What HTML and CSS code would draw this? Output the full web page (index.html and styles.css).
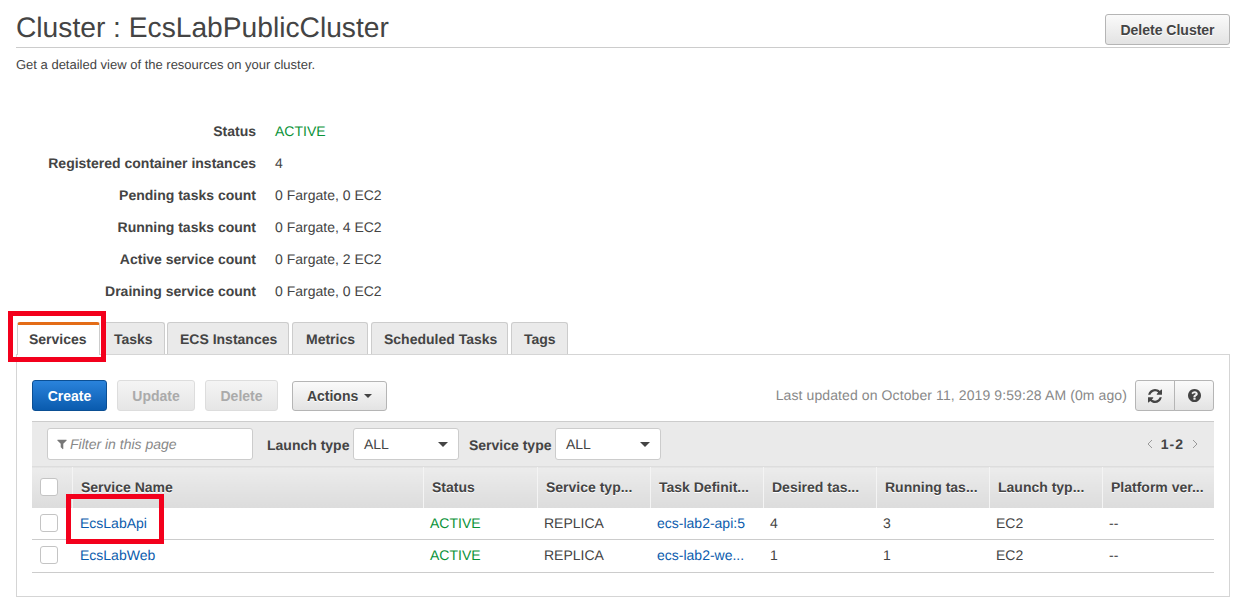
FILE: index.html
```html
<!DOCTYPE html>
<html>
<head>
    <meta charset="UTF-8">
    <title>Cluster : EcsLabPublicCluster</title>
    <link rel="stylesheet" href="styles.css">
</head>
<body>
    <div class="page">
        <div class="page-head">
            <h1>Cluster : EcsLabPublicCluster</h1>
            <button type="button" class="btn btn-delete-cluster">Delete Cluster</button>
        </div>
        <p class="page-desc">Get a detailed view of the resources on your cluster.</p>

        <dl class="details">
            <div class="detail-row"><dt>Status</dt><dd class="active">ACTIVE</dd></div>
            <div class="detail-row"><dt>Registered container instances</dt><dd>4</dd></div>
            <div class="detail-row"><dt>Pending tasks count</dt><dd>0 Fargate, 0 EC2</dd></div>
            <div class="detail-row"><dt>Running tasks count</dt><dd>0 Fargate, 4 EC2</dd></div>
            <div class="detail-row"><dt>Active service count</dt><dd>0 Fargate, 2 EC2</dd></div>
            <div class="detail-row"><dt>Draining service count</dt><dd>0 Fargate, 0 EC2</dd></div>
        </dl>

        <ul class="tabs">
            <li class="tab tab-active">Services</li>
            <li class="tab">Tasks</li>
            <li class="tab">ECS Instances</li>
            <li class="tab">Metrics</li>
            <li class="tab">Scheduled Tasks</li>
            <li class="tab">Tags</li>
        </ul>

        <div class="panel">
            <div class="actions">
                <button type="button" class="btn btn-primary">Create</button>
                <button type="button" class="btn btn-disabled btn-update">Update</button>
                <button type="button" class="btn btn-disabled btn-remove">Delete</button>
                <button type="button" class="btn btn-actions">Actions <span class="caret"></span></button>
                <span class="updated">Last updated on October 11, 2019 9:59:28 AM (0m ago)</span>
                <div class="btn-group">
                    <button type="button" class="btn btn-icon">
                        <svg width="14" height="14" viewBox="0 0 1536 1536"><path fill="#444" d="M1511 928q0 5-1 7-64 268-268 434.5t-478 166.5q-146 0-282.5-55t-243.5-157l-129 129q-19 19-45 19t-45-19-19-45v-448q0-26 19-45t45-19h448q26 0 45 19t19 45-19 45l-137 137q71 66 161 102t187 36q134 0 250-65t186-179q11-17 53-117 8-23 30-23h192q13 0 22.5 9.5t9.5 22.5zm25-800v448q0 26-19 45t-45 19h-448q-26 0-45-19t-19-45 19-45l138-138q-148-137-349-137-134 0-250 65t-186 179q-11 17-53 117-8 23-30 23h-199q-13 0-22.5-9.5t-9.5-22.5v-7q65-268 270-434.5t480-166.5q146 0 284 55.5t245 156.5l130-129q19-19 45-19t45 19 19 45z"/></svg>
                    </button>
                    <button type="button" class="btn btn-icon">
                        <svg width="13" height="13" viewBox="128 128 1536 1536"><path fill="#444" d="M1024 1376v-192q0-14-9-23t-23-9h-192q-14 0-23 9t-9 23v192q0 14 9 23t23 9h192q14 0 23-9t9-23zm256-672q0-88-55.5-163t-138.5-116-170-41q-243 0-371 213-15 24 8 42l132 100q7 6 19 6 16 0 25-12 53-68 86-92 34-24 86-24 48 0 85.5 26t37.5 59q0 38-20 61t-68 45q-63 28-115.5 86.5t-52.5 125.5v36q0 14 9 23t23 9h192q14 0 23-9t9-23q0-19 21.5-49.5t54.5-49.5q32-18 49-28.5t46-35 44.5-48 28-60.5 12.5-81zm384 192q0 209-103 385.5t-279.5 279.5-385.5 103-385.5-103-279.5-279.5-103-385.5 103-385.5 279.5-279.5 385.5-103 385.5 103 279.5 279.5 103 385.5z"/></svg>
                    </button>
                </div>
            </div>

            <div class="filters">
                <div class="filter-input">
                    <svg width="12" height="12" viewBox="0 0 1792 1792"><path fill="#777" d="M1595 295q17 41-14 70l-493 493v742q0 42-39 59-13 5-25 5-27 0-45-19l-256-256q-19-19-19-45v-486l-493-493q-31-29-14-70 17-39 59-39h1280q42 0 59 39z"/></svg>
                    <span>Filter in this page</span>
                </div>
                <span class="filter-label">Launch type</span>
                <div class="select">ALL<span class="select-arrow"></span></div>
                <span class="filter-label">Service type</span>
                <div class="select">ALL<span class="select-arrow"></span></div>
                <div class="pager">
                    <svg width="7" height="10" viewBox="0 0 7 10"><path fill="none" stroke="#999" d="M6 1 2 5l4 4"/></svg>
                    <b>1-2</b>
                    <svg width="7" height="10" viewBox="0 0 7 10"><path fill="none" stroke="#999" d="M1 1l4 4-4 4"/></svg>
                </div>
            </div>

            <table class="services">
                <thead>
                    <tr>
                        <th class="col-check"><span class="check"></span></th>
                        <th class="col-name">Service Name</th>
                        <th class="col-status">Status</th>
                        <th class="col-std">Service typ...</th>
                        <th class="col-std">Task Definit...</th>
                        <th class="col-std">Desired tas...</th>
                        <th class="col-std">Running tas...</th>
                        <th class="col-std">Launch typ...</th>
                        <th>Platform ver...</th>
                    </tr>
                </thead>
                <tbody>
                    <tr>
                        <td><span class="check"></span></td>
                        <td><a href="#">EcsLabApi</a></td>
                        <td class="active">ACTIVE</td>
                        <td>REPLICA</td>
                        <td><a href="#">ecs-lab2-api:5</a></td>
                        <td>4</td>
                        <td>3</td>
                        <td>EC2</td>
                        <td>--</td>
                    </tr>
                    <tr>
                        <td><span class="check"></span></td>
                        <td><a href="#">EcsLabWeb</a></td>
                        <td class="active">ACTIVE</td>
                        <td>REPLICA</td>
                        <td><a href="#">ecs-lab2-we...</a></td>
                        <td>1</td>
                        <td>1</td>
                        <td>EC2</td>
                        <td>--</td>
                    </tr>
                </tbody>
            </table>
        </div>
    </div>

    <div class="callout callout-tab"></div>
    <div class="callout callout-row"></div>
</body>
</html>
```

FILE: styles.css
```css
html, body {
    margin: 0;
    padding: 0;
}
body {
    font-family: "Liberation Sans", Arial, sans-serif;
    font-size: 14px;
    color: #444;
    background: #fff;
    height: 610px;
    overflow: hidden;
    position: relative;
    text-rendering: geometricPrecision;
}
.page {
    padding: 0 18px 0 16px;
}
.page-head {
    display: flex;
    justify-content: space-between;
    align-items: flex-start;
    height: 47px;
    border-bottom: 1px solid #ccc;
}
h1 {
    margin: 11px 0 0;
    font-size: 28.2px;
    line-height: 32px;
    font-weight: normal;
    color: #444;
}
.page-desc {
    margin: 9px 0 0;
    font-size: 13px;
    line-height: 16px;
    color: #444;
}
.details {
    margin: 42px 0 0;
}
.detail-row {
    display: flex;
    height: 32px;
    align-items: center;
}
.detail-row dt {
    width: 240px;
    text-align: right;
    font-weight: bold;
}
.detail-row dd {
    margin: 0 0 0 19px;
}
.active {
    color: #0a9339;
}

.btn {
    font-family: inherit;
    font-size: 14px;
    font-weight: bold;
    color: #444;
    height: 31px;
    padding: 0;
    border: 1px solid #b5b5b5;
    border-radius: 3px;
    background: linear-gradient(#fafafa, #e3e3e3);
    text-shadow: 0 1px 0 #fff;
}
.btn-delete-cluster {
    width: 125px;
    margin-top: 14px;
}

.tabs {
    display: flex;
    list-style: none;
    margin: 15px 0 0 1px;
    padding: 0;
    height: 33px;
    position: relative;
    z-index: 1;
}
.tab {
    box-sizing: border-box;
    height: 32px;
    line-height: 32px;
    margin-right: 3px;
    padding: 0 0 0 12px;
    font-weight: bold;
    color: #444;
    white-space: nowrap;
    background: #eaeaea;
    border: 1px solid #ccc;
    border-bottom: none;
    border-radius: 3px 3px 0 0;
}
.tab-active {
    height: 33px;
    width: 83px;
    margin-right: 2px;
    padding: 0 0 0 11px;
    background: #fff;
    border-top: 3px solid #e36c17;
    line-height: 29px;
}
.tab:nth-child(2) {
    width: 63px;
    margin-right: 2px;
    padding-left: 11px;
}
.tab:nth-child(3) {
    width: 122px;
}
.tab:nth-child(4) {
    width: 76px;
    padding-left: 13px;
}
.tab:nth-child(5) {
    width: 137px;
}
.tab:nth-child(6) {
    width: 57px;
}

.panel {
    margin-top: -1px;
    height: 241px;
    border: 1px solid #d5d5d5;
    padding: 0 15px;
}
.actions {
    display: flex;
    align-items: flex-start;
    height: 67px;
    border-bottom: 1px solid #ccc;
    box-sizing: border-box;
    padding-top: 25px;
}
.btn-primary {
    width: 75px;
    color: #fff;
    background: linear-gradient(#2a83dc, #0a5bae);
    border-color: #0b4f94;
    text-shadow: none;
}
.btn-disabled {
    color: #aaa;
    background: linear-gradient(#f4f4f4, #e6e6e6);
    border-color: #ddd;
    text-shadow: none;
}
.btn-update {
    width: 78px;
    margin-left: 10px;
}
.btn-remove {
    width: 73px;
    margin-left: 10px;
}
.btn-actions {
    width: 95px;
    height: 30px;
    margin: 1px 0 0 14px;
}
.caret {
    display: inline-block;
    margin-left: 2px;
    vertical-align: 3px;
    border-top: 4px solid #444;
    border-left: 4px solid transparent;
    border-right: 4px solid transparent;
}
.updated {
    margin: 7px 8px 0 auto;
    color: #888;
    line-height: 16px;
    letter-spacing: 0.1px;
}
.btn-group {
    display: flex;
    margin-top: 0;
}
.btn-icon {
    width: 40px;
    display: flex;
    align-items: center;
    justify-content: center;
    border-radius: 3px 0 0 3px;
}
.btn-icon + .btn-icon {
    margin-left: -1px;
    border-radius: 0 3px 3px 0;
}

.filters {
    display: flex;
    align-items: center;
    height: 44px;
    background: #eaeaea;
    padding-left: 15px;
    box-sizing: border-box;
}
.filter-input {
    box-sizing: border-box;
    width: 206px;
    height: 32px;
    display: flex;
    align-items: center;
    gap: 2px;
    padding-left: 8px;
    background: #fff;
    border: 1px solid #ccc;
    border-radius: 3px;
    font-style: italic;
    color: #888;
}
.filter-label {
    margin: 1px 3.5px 0 14px;
    font-weight: bold;
    color: #444;
}
.filter-label + .select + .filter-label {
    margin-left: 10px;
}
.select {
    box-sizing: border-box;
    width: 106px;
    height: 32px;
    line-height: 30px;
    padding-left: 10px;
    background: #fff;
    border: 1px solid #ccc;
    border-radius: 3px;
    position: relative;
}
.select-arrow {
    position: absolute;
    right: 10px;
    top: 13px;
    border-top: 5px solid #444;
    border-left: 5px solid transparent;
    border-right: 5px solid transparent;
}
.pager {
    margin-left: auto;
    margin-right: 15px;
    display: flex;
    align-items: center;
    gap: 8px;
}
.pager b {
    letter-spacing: 1px;
}

.services {
    border-collapse: collapse;
    table-layout: fixed;
    width: 1182px;
}
.col-check {
    width: 40px;
}
.col-name {
    width: 351px;
}
.col-status {
    width: 114px;
}
.col-std {
    width: 113px;
}
.services th {
    box-sizing: border-box;
    height: 41px;
    padding: 0 0 0 8.5px;
    text-align: left;
    white-space: nowrap;
    overflow: hidden;
    background: linear-gradient(#ececec, #dcdcdc);
    border-top: 1px solid #ddd;
    border-left: 1px solid #f4f4f4;
    text-shadow: 0 1px 0 #fff;
}
.services th:first-child {
    border-left: none;
    padding-left: 8px;
}
.services td {
    box-sizing: border-box;
    height: 32px;
    padding: 0 0 1px 7px;
    white-space: nowrap;
    overflow: hidden;
    border-bottom: 1px solid #ccc;
}
.services tbody tr:last-child td {
    height: 33px;
    padding-bottom: 2px;
}
.services td:first-child {
    padding-left: 8px;
}
.services td:nth-child(2) {
    padding-left: 8px;
}
.services a {
    color: #0b5cad;
    text-decoration: none;
}
.check {
    display: block;
    box-sizing: border-box;
    width: 18px;
    height: 18px;
    background: #fff;
    border: 1px solid #c4c4c4;
    border-radius: 3px;
}

.callout {
    position: absolute;
    box-sizing: border-box;
    border: 5px solid #f3001c;
    z-index: 2;
}
.callout-tab {
    left: 8px;
    top: 311px;
    width: 98px;
    height: 51px;
}
.callout-row {
    left: 66px;
    top: 494px;
    width: 98px;
    height: 50px;
}
```
